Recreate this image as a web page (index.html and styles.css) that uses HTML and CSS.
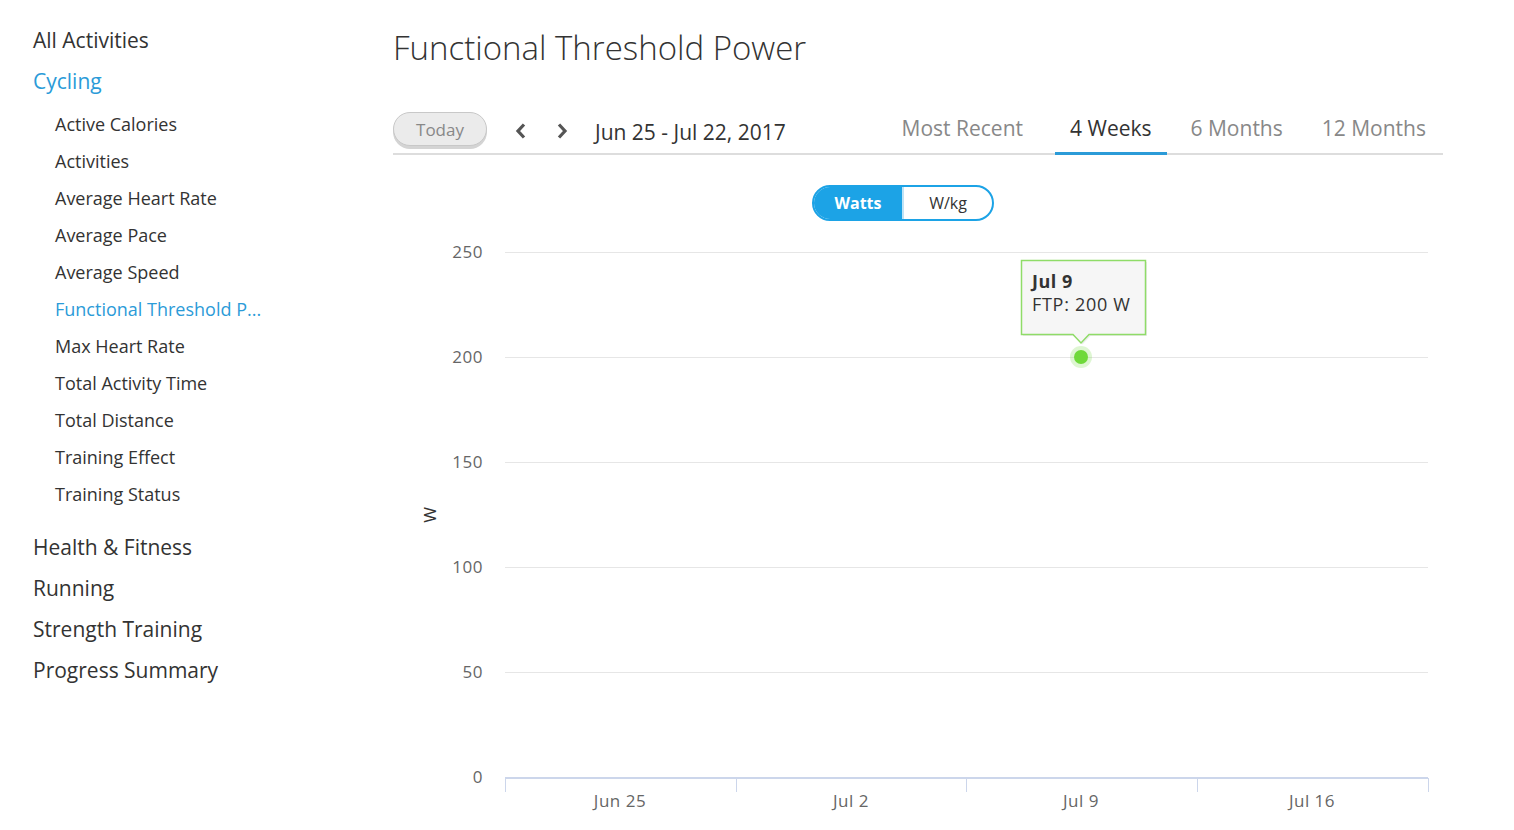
FILE: index.html
```html
<!DOCTYPE html>
<html lang="en">
<head>
    <meta charset="UTF-8">
    <title>Functional Threshold Power</title>
    <link rel="stylesheet" href="styles.css">
</head>
<body>
    <div class="page">
        <aside class="sidebar">
            <a class="nav-top" href="#">All Activities</a>
            <a class="nav-top active" href="#">Cycling</a>
            <div class="sub-list">
                <a class="nav-sub" href="#">Active Calories</a>
                <a class="nav-sub" href="#">Activities</a>
                <a class="nav-sub" href="#">Average Heart Rate</a>
                <a class="nav-sub" href="#">Average Pace</a>
                <a class="nav-sub" href="#">Average Speed</a>
                <a class="nav-sub active" href="#">Functional Threshold P...</a>
                <a class="nav-sub" href="#">Max Heart Rate</a>
                <a class="nav-sub" href="#">Total Activity Time</a>
                <a class="nav-sub" href="#">Total Distance</a>
                <a class="nav-sub" href="#">Training Effect</a>
                <a class="nav-sub" href="#">Training Status</a>
            </div>
            <a class="nav-top" href="#">Health &amp; Fitness</a>
            <a class="nav-top" href="#">Running</a>
            <a class="nav-top" href="#">Strength Training</a>
            <a class="nav-top" href="#">Progress Summary</a>
        </aside>

        <main class="content">
            <h1 class="title">Functional Threshold Power</h1>

            <div class="toolbar">
                <button class="today-btn">Today</button>
                <div class="arrows">
                    <svg width="14" height="18" viewBox="0 0 14 18"><polyline points="10,2.5 4,9 10,15.5" fill="none" stroke="#555" stroke-width="3.2"/></svg>
                    <svg width="14" height="18" viewBox="0 0 14 18"><polyline points="4,2.5 10,9 4,15.5" fill="none" stroke="#555" stroke-width="3.2"/></svg>
                </div>
                <div class="range">Jun 25 - Jul 22, 2017</div>
                <nav class="tabs">
                    <a class="tab first" href="#">Most Recent</a>
                    <a class="tab active" href="#">4 Weeks</a>
                    <a class="tab" href="#">6 Months</a>
                    <a class="tab" href="#">12 Months</a>
                </nav>
            </div>

            <div class="unit-toggle">
                <span class="unit active">Watts</span>
                <span class="unit">W/kg</span>
            </div>

            <div class="chart">
                <svg width="1050" height="600" viewBox="0 0 1050 600">
                    <g stroke="#e6e6e6" stroke-width="1">
                        <line x1="112" y1="22.5" x2="1035" y2="22.5"/>
                        <line x1="112" y1="127.5" x2="1035" y2="127.5"/>
                        <line x1="112" y1="232.5" x2="1035" y2="232.5"/>
                        <line x1="112" y1="337.5" x2="1035" y2="337.5"/>
                        <line x1="112" y1="442.5" x2="1035" y2="442.5"/>
                    </g>
                    <line x1="112" y1="548" x2="1035" y2="548" stroke="#ccd6eb" stroke-width="2"/>
                    <g stroke="#ccd6eb" stroke-width="1">
                        <line x1="112.5" y1="548" x2="112.5" y2="562"/>
                        <line x1="343.5" y1="548" x2="343.5" y2="562"/>
                        <line x1="573.5" y1="548" x2="573.5" y2="562"/>
                        <line x1="804.5" y1="548" x2="804.5" y2="562"/>
                        <line x1="1035.5" y1="548" x2="1035.5" y2="562"/>
                    </g>
                    <g class="axis-label" text-anchor="end">
                        <text x="90" y="28">250</text>
                        <text x="90" y="133">200</text>
                        <text x="90" y="238">150</text>
                        <text x="90" y="343">100</text>
                        <text x="90" y="448">50</text>
                        <text x="90" y="553">0</text>
                    </g>
                    <g class="axis-label" text-anchor="middle">
                        <text x="227" y="577">Jun 25</text>
                        <text x="458" y="577">Jul 2</text>
                        <text x="688" y="577">Jul 9</text>
                        <text x="919" y="577">Jul 16</text>
                    </g>
                    <text class="axis-title" transform="translate(43 285) rotate(-90)" text-anchor="middle">W</text>

                    <circle cx="688" cy="127" r="11" fill="#7ddb4a" opacity="0.25"/>
                    <circle cx="688" cy="127" r="7" fill="#6fd93a"/>

                    <path d="M628.5 30.5 H752.5 V104.5 H696 L688 113 L680 104.5 H628.5 Z" fill="#000" opacity="0.07" transform="translate(1.5 1.5)"/>
                    <path d="M628.5 30.5 H752.5 V104.5 H696 L688 113 L680 104.5 H628.5 Z" fill="#f7f7f7" fill-opacity="0.95" stroke="#8fdc68" stroke-width="1.5"/>
                    <text class="tip-head" x="639" y="58">Jul 9</text>
                    <text class="tip-body" x="639" y="81">FTP: 200 W</text>
                </svg>
            </div>
        </main>
    </div>
</body>
</html>
```

FILE: styles.css
```css
body {
    margin: 0;
    background: #fff;
    color: #333;
    font-family: "Open Sans", Arial, sans-serif;
}
a {
    text-decoration: none;
}
.page {
    display: flex;
}
.sidebar {
    width: 393px;
    flex-shrink: 0;
    padding: 20px 0 0 33px;
    display: flex;
    flex-direction: column;
    box-sizing: border-box;
}
.nav-top {
    font-size: 21px;
    line-height: 41px;
    color: #333;
}
.nav-top.active {
    color: #2b9bd8;
}
.sub-list {
    display: flex;
    flex-direction: column;
    padding: 4px 0 14px 22px;
}
.nav-sub {
    font-size: 18px;
    line-height: 37px;
    color: #333;
}
.nav-sub.active {
    color: #2b9bd8;
}
.content {
    width: 1050px;
    padding-top: 27px;
}
.title {
    margin: 0;
    font-size: 33px;
    font-weight: 300;
    line-height: 42px;
    color: #333;
}
.toolbar {
    display: flex;
    align-items: center;
    margin-top: 36px;
    height: 48px;
    border-bottom: 2px solid #ddd;
}
.today-btn {
    width: 94px;
    height: 34px;
    margin-top: 0;
    border: 1px solid #c8c8c8;
    border-radius: 17px;
    background: #ebebeb;
    box-shadow: 0 3px 0 #d4d4d4;
    color: #888;
    font-family: "Open Sans", Arial, sans-serif;
    font-size: 17px;
    padding: 0;
}
.arrows {
    display: flex;
    gap: 27px;
    margin-left: 27px;
    margin-top: 4px;
}
.range {
    margin-left: 26px;
    margin-top: 6px;
    font-size: 21px;
    color: #333;
}
.tabs {
    display: flex;
    margin-left: auto;
    margin-right: 2px;
    align-self: stretch;
}
.tab {
    display: flex;
    align-items: center;
    padding: 0 15px 1px;
    margin-left: 9px;
    font-size: 21px;
    color: #888;
    margin-bottom: -2px;
    border-bottom: 3px solid transparent;
}
.tab.first {
    margin-right: 8px;
}
.tab.active {
    color: #333;
    border-bottom-color: #2b9bd8;
}
.unit-toggle {
    display: flex;
    width: 182px;
    height: 36px;
    margin: 30px 0 0 419px;
    border: 2px solid #1ca3e6;
    border-radius: 18px;
    overflow: hidden;
    box-sizing: border-box;
}
.unit {
    flex: 1;
    display: flex;
    align-items: center;
    justify-content: center;
    font-size: 16px;
    color: #333;
}
.unit.active {
    background: #1ca3e6;
    color: #fff;
    font-weight: bold;
    border-right: 2px solid #bfe3f6;
}
.chart {
    margin-top: 9px;
}
.chart svg {
    display: block;
}
.axis-label {
    font-family: "Open Sans", Arial, sans-serif;
    font-size: 17px;
    letter-spacing: 0.5px;
    fill: #666;
}
.axis-title {
    font-family: "Open Sans", Arial, sans-serif;
    font-size: 17px;
    fill: #333;
}
.tip-head {
    font-family: "Open Sans", Arial, sans-serif;
    font-size: 18px;
    letter-spacing: 0.5px;
    font-weight: bold;
    fill: #333;
}
.tip-body {
    font-family: "Open Sans", Arial, sans-serif;
    font-size: 18px;
    letter-spacing: 0.7px;
    fill: #333;
}
```
